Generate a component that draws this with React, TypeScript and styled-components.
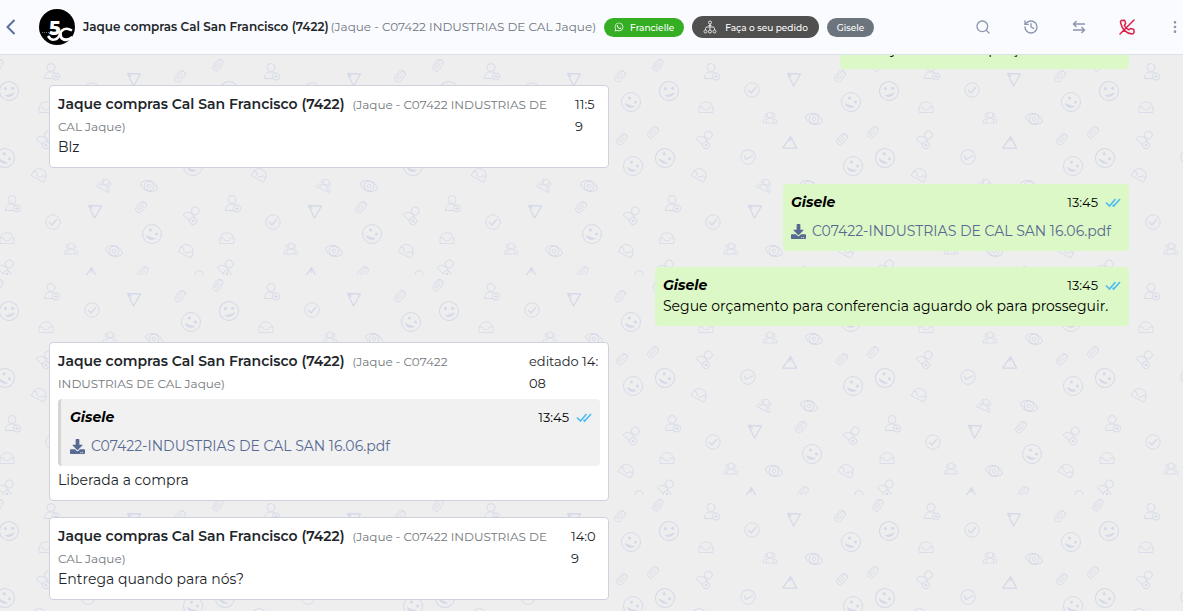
import React from 'react';
import styled, { createGlobalStyle } from 'styled-components';
import { Search, History, EllipsisVertical } from 'lucide-react';
import { FaDownload, FaWhatsapp } from 'react-icons/fa';

const GlobalStyle = createGlobalStyle`
  *, *::before, *::after { box-sizing: border-box; }
  body {
    margin: 0;
    font-family: Montserrat, Inter, 'Noto Sans', sans-serif;
    color: #212529;
    background: #eeeeee;
  }
  button { font: inherit; }
`;

const Page = styled.div`
  display: flex;
  flex-direction: column;
  height: 100vh;
`;

const Header = styled.header`
  display: flex;
  align-items: center;
  flex: none;
  height: 55px;
  padding-left: 7px;
  background: #fafbff;
  border-bottom: 1px solid #dbe1ea;
`;

const IconButton = styled.button<{ $color?: string }>`
  display: flex;
  align-items: center;
  justify-content: center;
  width: 16px;
  height: 24px;
  padding: 0;
  border: 0;
  background: none;
  cursor: pointer;
  color: ${(p) => p.$color ?? '#8b95ab'};
  svg { flex: none; }
`;

const BackButton = styled(IconButton)`
  width: 8px;
  margin-right: 24px;
`;

const Avatar = styled.svg`
  width: 36px;
  height: 36px;
  flex: none;
  margin-right: 8px;
`;

const ContactName = styled.h1`
  margin: 0;
  font-size: 12px;
  font-weight: 600;
  line-height: 18px;
  white-space: nowrap;
`;

const ContactAlias = styled.span`
  margin: 0 8px 0 2px;
  font-size: 12px;
  line-height: 18px;
  color: #6f7680;
  white-space: nowrap;
`;

const Tags = styled.div`
  display: flex;
  align-items: center;
  gap: 8px;
`;

const Tag = styled.span<{ $bg: string; $tall?: boolean }>`
  display: inline-flex;
  align-items: center;
  gap: ${(p) => (p.$tall ? '8px' : '6px')};
  height: ${(p) => (p.$tall ? '22px' : '19px')};
  padding: 0 ${(p) => (p.$tall ? '11px' : '10px')};
  border-radius: 11px;
  background: ${(p) => p.$bg};
  color: #ffffff;
  font-size: 9px;
  font-weight: 500;
  white-space: nowrap;
`;

const Actions = styled.nav`
  display: flex;
  gap: 32px;
  margin-left: auto;
`;

const Chat = styled.main`
  position: relative;
  flex: 1;
  min-height: 0;
  overflow: hidden;
  display: flex;
  flex-direction: column;
  justify-content: flex-end;
  gap: 16px;
  padding: 0 54px 11px 49px;
`;

const Wallpaper = styled.svg`
  position: absolute;
  inset: 0;
  width: 100%;
  height: 100%;
  fill: none;
  stroke: #d5d9e8;
`;

const Bubble = styled.article<{ $mine?: boolean; $min?: number }>`
  position: relative;
  flex: none;
  font-size: 14px;
  line-height: 21px;
  border-radius: 4px;
  ${(p) =>
    p.$mine
      ? `align-self: flex-end; min-width: ${p.$min}px; padding: 8px 8px 9px; background: #dcf8c6; color: #000000;`
      : `align-self: flex-start; width: 560px; max-width: 100%; padding: 7px 8px 9px; background: #ffffff; border: 1px solid #cfd2de;`}
`;

const Meta = styled.div<{ $spread?: boolean }>`
  display: flex;
  justify-content: space-between;
  gap: 24px;
  line-height: ${(p) => (p.$spread ? '21px' : '22px')};
`;

const Sender = styled.strong`
  font-weight: 600;
`;

const Agent = styled.em`
  font-weight: 700;
`;

const Alias = styled.span`
  margin-left: 4px;
  font-size: 12px;
  line-height: 16px;
  color: #73777c;
`;

const SplitTime = styled.time<{ $width: number }>`
  flex: none;
  width: ${(p) => p.$width}px;
  font-size: 13px;
  word-break: break-all;
`;

const Time = styled.time`
  display: flex;
  align-items: center;
  gap: 7px;
  font-size: 13px;
`;

const Text = styled.p`
  margin: 0;
`;

const FileLink = styled.a`
  display: flex;
  align-items: center;
  gap: 6px;
  margin-top: 8px;
  color: #586a92;
  text-decoration: none;
  white-space: nowrap;
`;

const Quote = styled.blockquote`
  margin: 5px 0 4px;
  padding: 8px 8px 9px 9px;
  border-left: 3px solid #d5d5d5;
  border-radius: 4px;
  background: #f1f1f1;
  color: #000000;
`;

const Ticks = () => (
  <svg width="16" height="11" viewBox="0 0 16 11" fill="none" stroke="#4fbdf3" strokeWidth="1.700" role="img" aria-label="Lida">
    <path d="M1 5.500 4.500 9 10.500 2M7.500 8 8.700 9 15 2" />
  </svg>
);

type Spot = [kind: string, x: number, y: number, angle: number];

const SPOTS: Spot[] = [
  ['clip', 180, 21, 0], ['clip', 218, 10, -10], ['clip', -2, 10, -10],
  ['userPlus', 52, 17, 0], ['check', 92, 35, 0], ['plane', 134, 24, 0],
  ['smile', 191, 47, 0], ['smile', 9, 36, -35], ['smile', 229, 36, -35],
  ['inbox', 46, 52, 0], ['group', 110, 63, 0], ['eye', 154, 64, 0],
  ['clip', 182, 84, 0], ['clip', 213, 77, 0], ['userPlus', 46, 84, 42],
  ['smile', 193, 111, 0], ['smile', 5, 103, 10], ['smile', 225, 103, 10],
  ['check', 88, 102, 22], ['plane', 129, 90, 60], ['inbox', 40, 119, 28],
  ['group', 105, 130, 25], ['eye', 149, 131, 0], ['clip', 141, 152, 0],
  ['smile', 152, 179, 0], ['userPlus', 193, 160, 42], ['userPlus', 13, 149, 0],
  ['check', 53, 167, 0], ['plane', 95, 156, 0], ['inbox', 187, 195, 28],
  ['inbox', 7, 183, 0], ['inbox', 227, 183, 0], ['group', 71, 194, 0],
  ['eye', 114, 196, 0], ['userPlus', 7, 213, 42], ['userPlus', 227, 213, 42],
  ['userPlus', 200, 224, 0], ['plane', 90, 221, 60], ['clip', 143, 217, 0],
];

const Motif = ({ kind }: { kind: string }) => {
  switch (kind) {
    case 'smile':
      return (
        <g>
          <circle r="9.500" />
          <g fill="#d5d9e8" stroke="none">
            <circle cx="-1.500" cy="-4" r="1.600" />
            <circle cx="4.500" cy="0" r="1.600" />
            <path d="M-6 1C-2 3 1 4 4 4 2 7-5 6.500-6 1Z" />
          </g>
        </g>
      );
    case 'clip':
      return (
        <path
          strokeWidth="0.8"
          transform="rotate(40)"
          d="M-3.500-3V3a3.500 3.500 0 0 0 7 0V-3.500a2.500 2.500 0 0 0-5 0V2.500a1.200 1.200 0 0 0 2.500 0V-3M-3.500-3a3.500 3.500 0 0 1 6-2"
        />
      );
    case 'userPlus':
      return (
        <g strokeWidth="0.9">
          <circle cx="-1" cy="-4.500" r="4" />
          <path d="M1 6.500H-7.500C-7.500 2-5 0-1 0 1 0 2 .5 3 1.500" />
          <circle cx="4" cy="4.500" r="3.700" />
          <path d="M4 2.500v4M2 4.500h4" />
        </g>
      );
    case 'check':
      return (
        <g strokeWidth="0.9">
          <circle r="7.200" />
          <path strokeWidth="1.200" d="M-4 0-1 3 4-3" />
        </g>
      );
    case 'plane':
      return <path strokeWidth="1.300" strokeLinejoin="round" d="M-6.500-5.500 6.500-5-.5 7ZM-6.500-5.500-2.500-2.500" />;
    case 'inbox':
      return (
        <path strokeWidth="0.8" d="M-7 0-4-4.500Q0-6 4-4.500L7 0V5.500H-7ZM-7 0H-3.500Q-3 3 0 3T3.500 0H7" />
      );
    case 'group':
      return (
        <g strokeWidth="0.8">
          <circle cy="-3" r="3" />
          <path d="M-4 5C-4 2-3 0 0 0S4 2 4 5ZM-4.500 5H-7C-7 2-6 1-3.500 1M4.500 5H7C7 2 6 1 3.500 1" />
          <path d="M-3-4.500a2 2 0 1 0 0 4M3-4.500a2 2 0 1 1 0 4" />
        </g>
      );
    default:
      return (
        <g strokeWidth="0.9" transform="rotate(18)">
          <path d="M-9 0C-5-7 5-7 9 0 5 7-5 7-9 0Z" />
          <circle r="4.800" />
          <circle r="1.800" />
        </g>
      );
  }
};

const ChatWallpaper = () => (
  <Wallpaper aria-hidden="true">
    <defs>
      <pattern id="doodles" width="220" height="220" patternUnits="userSpaceOnUse">
        {SPOTS.map(([kind, x, y, angle], i) => (
          <g key={i} transform={`translate(${x} ${y}) rotate(${angle})`}>
            <Motif kind={kind} />
          </g>
        ))}
      </pattern>
    </defs>
    <rect width="100%" height="100%" fill="url(#doodles)" stroke="none" />
  </Wallpaper>
);

const FileContent = () => (
  <>
    <Meta $spread>
      <Agent>Gisele</Agent>
      <Time>13:45 <Ticks /></Time>
    </Meta>
    <FileLink href="#pdf">
      <FaDownload size={15} />
      C07422-INDUSTRIAS DE CAL SAN 16.06.pdf
    </FileLink>
  </>
);

const CustomerMeta = ({ time, width }: { time: string; width: number }) => (
  <Meta>
    <div>
      <Sender>Jaque compras Cal San Francisco (7422)</Sender>{' '}
      <Alias>(Jaque - C07422 INDUSTRIAS DE CAL Jaque)</Alias>
    </div>
    <SplitTime $width={width}>{time}</SplitTime>
  </Meta>
);

export default function App() {
  return (
    <Page>
      <GlobalStyle />
      <Header>
        <BackButton $color="#5b6f9d" aria-label="Voltar">
          <svg width="10" height="16" viewBox="0 0 10 16" fill="none" stroke="currentColor" strokeWidth="2">
            <path d="M8.500 1 1.500 8l7 7" />
          </svg>
        </BackButton>
        <Avatar viewBox="0 0 36 36" role="img" aria-label="5C">
          <circle cx="18" cy="18" r="18" fill="#000" />
          <path d="M3 23.500h10" stroke="#777" strokeDasharray="1 1" />
          <text x="10" y="26" fill="#fff" fontFamily="Montserrat, Inter, sans-serif" fontWeight="800" fontSize="19">5</text>
          <path d="M9 27C12 32 18 32 20.500 26 22.500 20 27 18 33 21.500" stroke="#fff" strokeWidth="2.500" fill="none" />
          <path d="M21.500 24C20.500 31 28 33 33.500 28" stroke="#fff" strokeWidth="3" fill="none" />
        </Avatar>
        <ContactName>Jaque compras Cal San Francisco (7422)</ContactName>
        <ContactAlias>(Jaque - C07422 INDUSTRIAS DE CAL Jaque)</ContactAlias>
        <Tags>
          <Tag $bg="#35ae24"><FaWhatsapp size={10} />Francielle</Tag>
          <Tag $bg="#505050" $tall>
            <svg width="14" height="14" viewBox="0 0 14 14" fill="none" stroke="#e4e4e4" aria-hidden="true">
              <circle cx="7" cy="2.500" r="1.500" />
              <path d="M7 4v6M2.500 10V8.500Q2.500 7 4 7h6q1.500 0 1.500 1.500V10M5.500 5.500h3" />
              <circle cx="2.500" cy="11.500" r="1.500" />
              <circle cx="7" cy="11.500" r="1.500" />
              <circle cx="11.500" cy="11.500" r="1.500" />
            </svg>
            Faça o seu pedido
          </Tag>
          <Tag $bg="#6c757d">Gisele</Tag>
        </Tags>
        <Actions aria-label="Ações da conversa">
          <IconButton aria-label="Buscar"><Search size={16} /></IconButton>
          <IconButton aria-label="Histórico"><History size={16} /></IconButton>
          <IconButton aria-label="Transferir">
            <svg width="14" height="14" viewBox="0 0 14 14" fill="none" stroke="currentColor" strokeWidth="1.400">
              <path d="M13 4H1.500M4.500 1 1.500 4l3 3M1 10h11.500M9.500 7l3 3-3 3" />
            </svg>
          </IconButton>
          <IconButton aria-label="Encerrar" $color="#dc2149">
            <svg width="16" height="16" viewBox="0 0 16 16" fill="none" stroke="currentColor" strokeWidth="1.500" strokeLinejoin="round" strokeLinecap="round">
              <path d="M2.500 1.500 5 1.200Q5.700 1.200 6 2L6.600 4.500 5.300 6.500Q7 9.500 9.800 10.800L11.500 9.500 14.300 10.200Q15 10.500 15 11.200V13.500Q14.500 15 13 15 4 14 1.500 3.500 1.300 2 2.500 1.500ZM15 1 1 15" />
            </svg>
          </IconButton>
          <IconButton aria-label="Mais opções"><EllipsisVertical size={16} strokeWidth={2} /></IconButton>
        </Actions>
      </Header>
      <Chat>
        <ChatWallpaper />
        <Bubble $mine $min={289}>
          <Text>Estou já verificando preços do item.</Text>
        </Bubble>
        <Bubble>
          <CustomerMeta time="11:59" width={25} />
          <Text>Blz</Text>
        </Bubble>
        <Bubble $mine $min={346}>
          <FileContent />
        </Bubble>
        <Bubble $mine $min={474}>
          <Meta $spread>
            <Agent>Gisele</Agent>
            <Time>13:45 <Ticks /></Time>
          </Meta>
          <Text>Segue orçamento para conferencia aguardo ok para prosseguir.</Text>
        </Bubble>
        <Bubble>
          <CustomerMeta time="editado 14:08" width={71} />
          <Quote>
            <FileContent />
          </Quote>
          <Text>Liberada a compra</Text>
        </Bubble>
        <Bubble>
          <CustomerMeta time="14:09" width={29} />
          <Text>Entrega quando para nós?</Text>
        </Bubble>
      </Chat>
    </Page>
  );
}
